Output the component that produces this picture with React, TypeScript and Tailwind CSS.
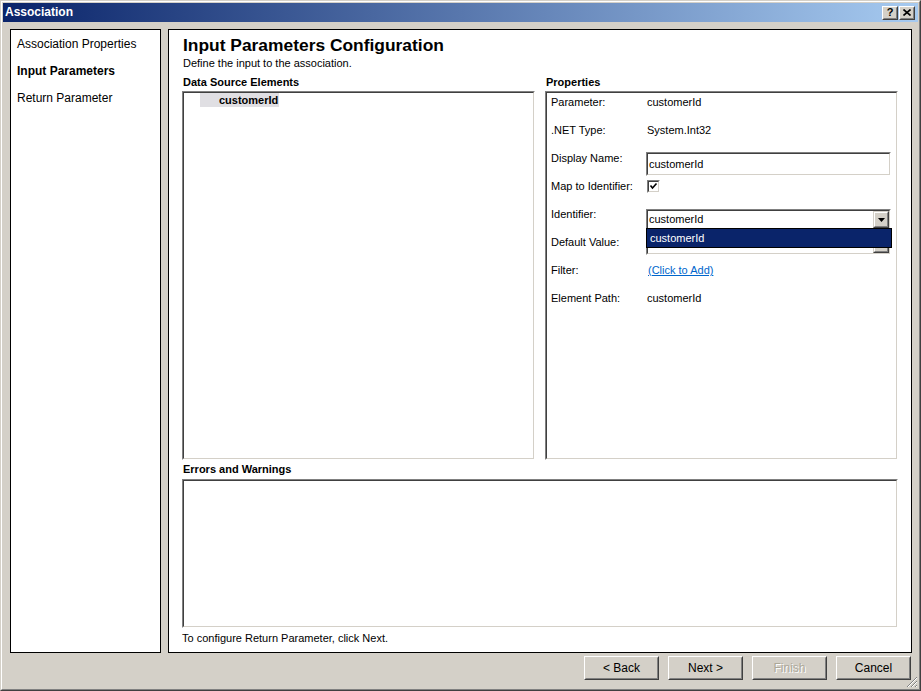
import React from "react";

const F = { fontFamily: "Tahoma, 'Liberation Sans', Arial, sans-serif" };

function Sunken({ className = "", children }: { className?: string; children?: React.ReactNode }) {
  return (
    <div className={"border border-t-[#808080] border-l-[#808080] border-r-white border-b-white " + className}>
      <div className="h-full w-full border border-t-[#404040] border-l-[#404040] border-r-[#d4d0c8] border-b-[#d4d0c8] bg-white">
        {children}
      </div>
    </div>
  );
}

function Btn({ children, disabled }: { children: React.ReactNode; disabled?: boolean }) {
  return (
    <div className="w-[75px] h-[24px] border border-t-white border-l-white border-r-[#404040] border-b-[#404040] bg-[#d4d0c8]">
      <div className="h-full w-full border border-t-[#d4d0c8] border-l-[#d4d0c8] border-r-[#808080] border-b-[#808080] flex items-center justify-center text-[12px]">
        {disabled ? (
          <span className="text-[#aca899] [text-shadow:1px_1px_0_#ffffff]">{children}</span>
        ) : (
          <span className="text-black">{children}</span>
        )}
      </div>
    </div>
  );
}

function TitleBtn({ children }: { children: React.ReactNode }) {
  return (
    <div className="w-[16px] h-[14px] border border-t-white border-l-white border-r-[#404040] border-b-[#404040] bg-[#d4d0c8]">
      <div className="h-full w-full border border-t-[#d4d0c8] border-l-[#d4d0c8] border-r-[#808080] border-b-[#808080] flex items-center justify-center">
        {children}
      </div>
    </div>
  );
}

function ComboArrow() {
  return (
    <div className="w-[16px] h-[17px] border border-t-[#d4d0c8] border-l-[#d4d0c8] border-r-[#404040] border-b-[#404040] bg-[#d4d0c8]">
      <div className="h-full w-full border border-t-white border-l-white border-r-[#808080] border-b-[#808080] flex items-center justify-center">
        <svg width="7" height="4" viewBox="0 0 7 4">
          <path d="M0 0h7L3.5 4z" fill="#000" />
        </svg>
      </div>
    </div>
  );
}

function Row({ label, children }: { label: string; children?: React.ReactNode }) {
  return (
    <div className="h-[28px] flex">
      <div className="w-[100px] pl-[4px] pt-[2px] leading-[14px] text-[11px] shrink-0">{label}</div>
      <div className="flex-1 pr-[5px]">{children}</div>
    </div>
  );
}

export default function App() {
  return (
    <div style={F} className="w-[921px] h-[691px] bg-[#d4d0c8] text-black overflow-hidden">
      <div className="w-full h-full border border-t-[#d4d0c8] border-l-[#d4d0c8] border-r-[#404040] border-b-[#404040]">
        <div className="w-full h-full border border-t-white border-l-white border-r-[#808080] border-b-[#808080] p-[1px] flex flex-col relative">
          {/* Title bar */}
          <div className="h-[19px] shrink-0 flex items-center justify-between pl-[2px] pr-[3px] bg-[linear-gradient(to_right,#0a246a,#a6caf0)]">
            <span className="text-white font-bold text-[12px] leading-[19px]">Association</span>
            <div className="flex gap-[1px]">
              <TitleBtn>
                <span className="text-[11px] font-bold leading-none">?</span>
              </TitleBtn>
              <TitleBtn>
                <svg width="8" height="7" viewBox="0 0 8 7">
                  <path d="M0.5 0.5L7.5 6.5M7.5 0.5L0.5 6.5" stroke="#000" strokeWidth="1.6" />
                </svg>
              </TitleBtn>
            </div>
          </div>

          {/* Main */}
          <div className="flex gap-[7px] pl-[7px] pr-[6px] pt-[7px] h-[631px] shrink-0">
            <div className="w-[151px] h-[624px] border border-black bg-white pl-[6px] pt-[7px] text-[12px]">
              <div className="h-[27px] leading-[15px]">Association Properties</div>
              <div className="h-[27px] leading-[15px] font-bold">Input Parameters</div>
              <div className="h-[27px] leading-[15px]">Return Parameter</div>
            </div>
            <div className="flex-1 h-[624px] border border-black bg-white pl-[13px] pr-[13px] pt-[5px] flex flex-col">
              <div className="h-[21px] leading-[21px] text-[17.4px] font-bold pl-[1px]">Input Parameters Configuration</div>
              <div className="h-[14px] leading-[14px] text-[11px] pl-[1px]">Define the input to the association.</div>
              <div className="flex gap-[10px]">
                <div className="flex-1 flex flex-col">
                  <div className="h-[21px] pt-[5px] leading-[14px] text-[11px] font-bold pl-[1px]">Data Source Elements</div>
                  <Sunken className="h-[369px]">
                    <div className="flex pl-[16px]">
                      <div className="bg-[#e0dfe3] h-[14px] leading-[14px] pl-[19px] pr-[1px] text-[11px] font-bold">
                        customerId
                      </div>
                    </div>
                  </Sunken>
                </div>
                <div className="flex-1 flex flex-col">
                  <div className="h-[21px] pt-[5px] leading-[14px] text-[11px] font-bold pl-[1px]">Properties</div>
                  <Sunken className="h-[369px]">
                    <div className="relative">
                      <Row label="Parameter:">
                        <div className="pt-[2px] leading-[14px] text-[11px]">customerId</div>
                      </Row>
                      <Row label=".NET Type:">
                        <div className="pt-[2px] leading-[14px] text-[11px]">System.Int32</div>
                      </Row>
                      <Row label="Display Name:">
                        <Sunken className="mt-[3px] h-[24px] -ml-[1px]">
                          <div className="pl-[1px] leading-[20px] text-[11px]">customerId</div>
                        </Sunken>
                      </Row>
                      <Row label="Map to Identifier:">
                        <div className="pt-[3px]">
                          <Sunken className="w-[13px] h-[13px]">
                            <svg width="9" height="9" viewBox="0 0 9 9" className="block">
                              <path d="M1.5 3.5L3.5 6L7.5 1.5" stroke="#000" strokeWidth="1.6" fill="none" />
                            </svg>
                          </Sunken>
                        </div>
                      </Row>
                      <Row label="Identifier:">
                        <Sunken className="mt-[4px] h-[21px] -ml-[1px]">
                          <div className="flex h-full items-center justify-between pr-0">
                            <span className="pl-[1px] text-[11px] leading-[17px]">customerId</span>
                            <ComboArrow />
                          </div>
                        </Sunken>
                      </Row>
                      <Row label="Default Value:">
                        <Sunken className="h-[22px] -ml-[1px]">
                          <div className="flex h-full items-end justify-between">
                            <span className="pl-[2px] text-[11px] leading-[17px]">&lt;&lt;None&gt;&gt;</span>
                            <ComboArrow />
                          </div>
                        </Sunken>
                      </Row>
                      <Row label="Filter:">
                        <div className="pt-[2px] pl-[1px] leading-[14px] text-[11px] text-[#0066cc] underline">(Click to Add)</div>
                      </Row>
                      <Row label="Element Path:">
                        <div className="pt-[2px] leading-[14px] text-[11px]">customerId</div>
                      </Row>

                      {/* Open dropdown list */}
                      <div className="absolute left-[99px] right-[4px] top-[135px] h-[20px] border border-black bg-[#0a246a] text-white text-[11px] leading-[18px] pl-[3px]">
                        customerId
                      </div>
                    </div>
                  </Sunken>
                </div>
              </div>
              <div className="h-[19px] pt-[2px] leading-[14px] text-[11px] font-bold pl-[1px]">Errors and Warnings</div>
              <Sunken className="h-[149px]" />
              <div className="pt-[3px] leading-[14px] text-[11px]">To configure Return Parameter, click Next.</div>
            </div>
          </div>

          {/* Buttons */}
          <div className="flex justify-end gap-[9px] pr-[7px] pt-[3px]">
            <Btn>&lt; Back</Btn>
            <Btn>Next &gt;</Btn>
            <Btn disabled>Finish</Btn>
            <Btn>Cancel</Btn>
          </div>

          {/* Resize grip */}
          <svg className="absolute right-[1px] bottom-[1px]" width="12" height="12" viewBox="0 0 12 12">
            <path d="M11 1L1 11M11 5L5 11M11 9L9 11" stroke="#808080" strokeWidth="1" />
            <path d="M11 2L2 11M11 6L6 11M11 10L10 11" stroke="#ffffff" strokeWidth="1" />
          </svg>
        </div>
      </div>
    </div>
  );
}
